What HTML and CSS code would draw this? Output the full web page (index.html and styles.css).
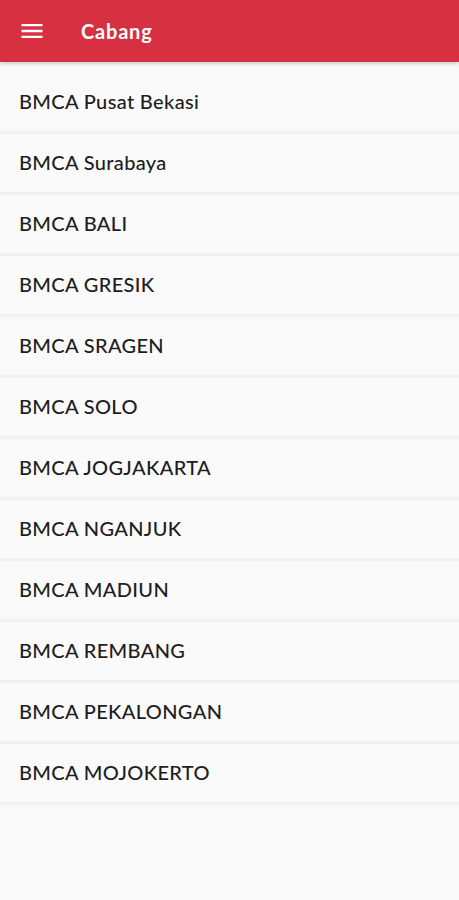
FILE: index.html
```html
<!DOCTYPE html>
<html lang="id">
<head>
<meta charset="utf-8">
<title>Cabang</title>
<link rel="stylesheet" href="styles.css">
</head>
<body>
<header class="appbar">
  <button class="menu-btn" aria-label="Menu">
    <svg width="28" height="28" viewBox="0 0 24 24"><path d="M3 6h18v2H3zM3 11h18v2H3zM3 16h18v2H3z" fill="#fff"/></svg>
  </button>
  <h1 class="title">Cabang</h1>
</header>
<ul class="list">
  <li class="row">BMCA Pusat Bekasi</li>
  <li class="row">BMCA Surabaya</li>
  <li class="row">BMCA BALI</li>
  <li class="row">BMCA GRESIK</li>
  <li class="row">BMCA SRAGEN</li>
  <li class="row">BMCA SOLO</li>
  <li class="row">BMCA JOGJAKARTA</li>
  <li class="row">BMCA NGANJUK</li>
  <li class="row">BMCA MADIUN</li>
  <li class="row">BMCA REMBANG</li>
  <li class="row">BMCA PEKALONGAN</li>
  <li class="row">BMCA MOJOKERTO</li>
</ul>
</body>
</html>
```
FILE: styles.css
```css
html, body {
  margin: 0;
  padding: 0;
  background: #fafafa;
  font-family: Lato, "Open Sans", sans-serif;
}
.appbar {
  height: 62px;
  background: #d63041;
  display: flex;
  align-items: center;
  box-shadow: 0 2px 4px rgba(0,0,0,0.18);
  position: relative;
  z-index: 1;
}
.menu-btn {
  background: none;
  border: 0;
  padding: 0;
  margin-left: 18px;
  width: 28px;
  height: 28px;
  display: flex;
}
.title {
  margin: 0 0 0 35px;
  color: #fff;
  font-size: 20px;
  font-weight: 700;
  letter-spacing: 0.8px;
}
.list {
  list-style: none;
  margin: 0;
  padding: 11px 0 0;
}
.row {
  box-sizing: border-box;
  height: 61px;
  display: flex;
  align-items: center;
  padding: 0 0 3px 19px;
  font-size: 20px;
  font-weight: 500;
  letter-spacing: 0.35px;
  color: #1e1e1e;
  border-bottom: 3px solid #f1f1f1;
}
```
